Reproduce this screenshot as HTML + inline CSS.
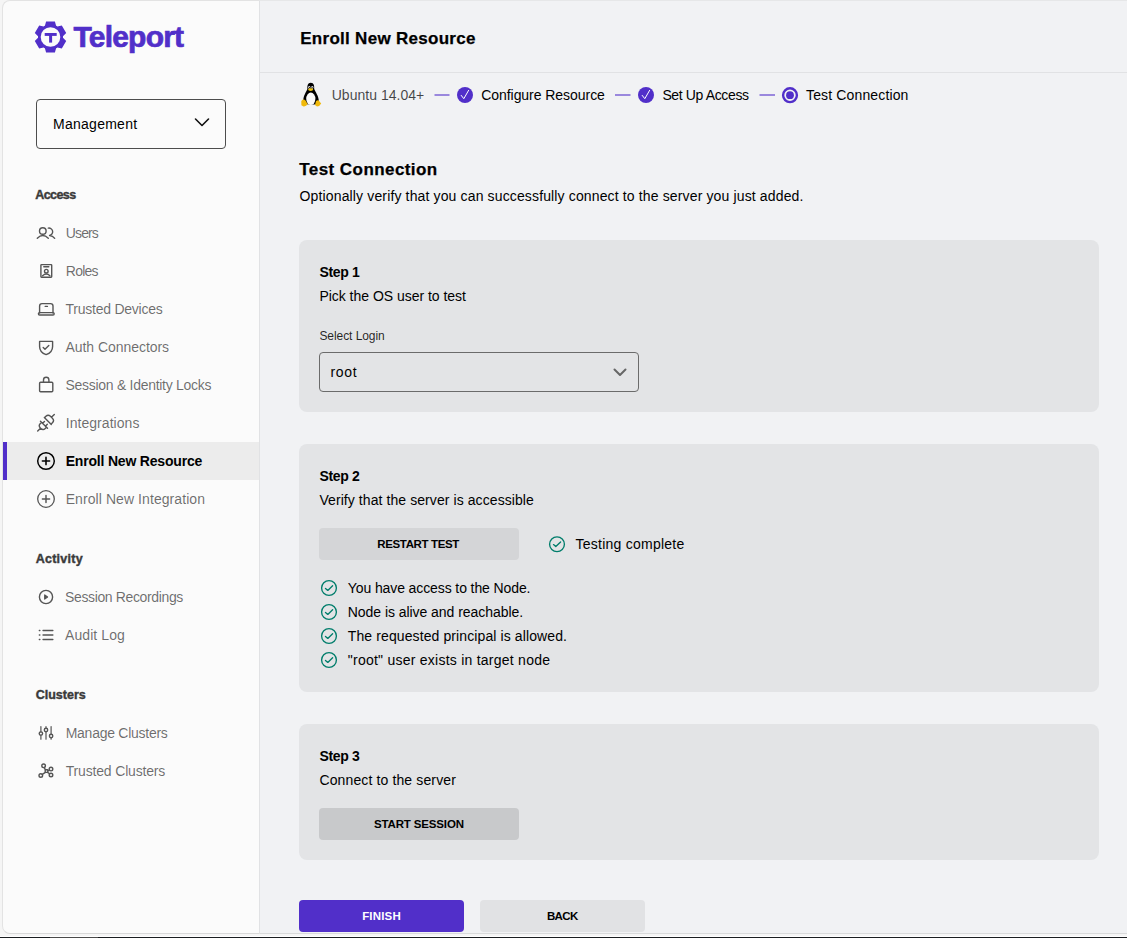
<!DOCTYPE html>
<html><head><meta charset="utf-8"><title>Teleport</title><style>
*{margin:0;padding:0;box-sizing:border-box}
html,body{width:1127px;height:938px;overflow:hidden;background:#f5f5f5;font-family:'Liberation Sans',sans-serif}
.t{position:absolute;height:60px;line-height:60px;white-space:nowrap}
.a{position:absolute}
</style></head>
<body>
<div class="a" style="left:0;top:0;width:1127px;height:938px;background:#f5f5f5"></div>
<div class="a" style="left:259px;top:0;width:868px;height:934px;background:#f1f2f4;border-top:1px solid #e6e7e8;border-bottom:1px solid #d9dadb"></div>
<div class="a" style="left:2px;top:0;width:258px;height:934px;background:#fbfbfb;border:1px solid #e3e3e3;border-bottom-color:#d9d9d9;border-right:1px solid #e1e2e4;border-radius:8px 0 0 8px"></div>
<div class="a" style="left:0;top:936px;width:1127px;height:1px;background:#fff"></div>
<div class="a" style="left:0;top:937px;width:1127px;height:1px;background:#1b1e21"></div>
<div class="a" style="left:50px;top:937px;width:48px;height:1px;background:#4a4a4a"></div>
<div class="a" style="left:260px;top:72px;width:867px;height:1px;background:#e1e2e4"></div>
<div class="a" style="left:36px;top:99px;width:190px;height:50px;border:1px solid #4d4d4d;border-radius:4px"></div>
<div class="a" style="left:3px;top:442px;width:256px;height:38px;background:#ececec"></div>
<div class="a" style="left:3px;top:442px;width:4px;height:38px;background:#512fc9"></div>
<div class="a" style="left:299px;top:240px;width:800px;height:172px;background:#e3e4e6;border-radius:8px"></div>
<div class="a" style="left:299px;top:444px;width:800px;height:248px;background:#e3e4e6;border-radius:8px"></div>
<div class="a" style="left:299px;top:724px;width:800px;height:136px;background:#e3e4e6;border-radius:8px"></div>
<div class="a" style="left:319px;top:352px;width:320px;height:40px;border:1px solid #6b6b6b;border-radius:4px"></div>
<div class="a" style="left:319px;top:528px;width:200px;height:32px;background:#d4d5d7;border-radius:4px"></div>
<div class="a" style="left:319px;top:808px;width:200px;height:32px;background:#c8c9cb;border-radius:4px"></div>
<div class="a" style="left:299px;top:900px;width:165px;height:32px;background:#512fc9;border-radius:4px"></div>
<div class="a" style="left:480px;top:900px;width:165px;height:32px;background:#e1e2e4;border-radius:4px"></div>
<svg class="a" style="left:0;top:0" width="260" height="938" viewBox="0 0 260 938" fill="none" stroke="#555" stroke-width="1.4" stroke-linecap="round" stroke-linejoin="round">
<!-- logo gear -->
<g fill="#512fc9" stroke="none">
<path id="gear" d="M44.90 25.82 L46.10 21.41 L54.90 21.41 L56.10 25.82 A12.50 12.50 0 0 1 57.38 26.56 L61.80 25.39 L66.20 33.02 L62.98 36.26 A12.50 12.50 0 0 1 62.98 37.74 L66.20 40.98 L61.80 48.61 L57.38 47.44 A12.50 12.50 0 0 1 56.10 48.18 L54.90 52.59 L46.10 52.59 L44.90 48.18 A12.50 12.50 0 0 1 43.62 47.44 L39.20 48.61 L34.80 40.98 L38.02 37.74 A12.50 12.50 0 0 1 38.02 36.26 L34.80 33.02 L39.20 25.39 L43.62 26.56 A12.50 12.50 0 0 1 44.90 25.82 Z"/>
</g>
<circle cx="50.5" cy="37" r="9.8" fill="#fbfbfb" stroke="none"/>
<rect x="44.7" y="33" width="12" height="2.9" fill="#512fc9" stroke="none"/>
<rect x="49.1" y="33" width="3" height="9.6" fill="#512fc9" stroke="none"/>
<!-- mgmt chevron -->
<path d="M195.5 119 L202 125.5 L208.5 119" stroke="#111" stroke-width="1.6"/>
<!-- users -->
<circle cx="42.8" cy="231" r="3.3"/>
<path d="M37.3 238.3 Q42.8 232.9 48.3 238.3"/>
<path d="M48.3 228.1 A3.3 3.3 0 1 1 49.6 235.4"/>
<path d="M49.6 235.6 Q52.8 235.8 54.7 238.3"/>
<!-- roles badge -->
<rect x="40.9" y="264.6" width="10.8" height="12.6" rx="0.6"/>
<path d="M43.8 266.7 H48.8"/>
<circle cx="46.3" cy="271.2" r="1.8"/>
<path d="M42.6 275.7 Q46.3 272.4 49.9 275.7"/>
<!-- laptop -->
<path d="M39.6 313 V306 Q39.6 303.6 42 303.6 H50.6 Q53 303.6 53 306 V313"/>
<rect x="38.4" y="312.6" width="15.8" height="2.4" rx="1.2"/>
<path d="M45.2 306.4 H47.4"/>
<!-- shield -->
<path d="M39.6 341.4 H52.6 V346.4 Q52.6 352.4 46.1 354.6 Q39.6 352.4 39.6 346.4 Z"/>
<path d="M43.2 347.4 L45 349.2 L48.8 345.6"/>
<!-- lock -->
<rect x="39.6" y="382.2" width="13.2" height="9.6" rx="1"/>
<path d="M43.5 382.2 V380 A2.7 2.7 0 0 1 48.9 380 V382.2"/>
<!-- plugs -->
<g transform="translate(45.9 422.85) rotate(-45)">
<path d="M-2.7 -5 V5 M-2.7 -3.5 H-4.4 Q-7.6 -3.5 -7.6 0 Q-7.6 3.5 -4.4 3.5 H-2.7 M-7.6 0 H-11.6 M-2.7 -2 H0 M-2.7 2 H0"/>
<path d="M2.7 -4.9 V4.9 M2.7 -4.6 H4.6 Q7.8 -4.6 7.8 -1.4 V1.4 Q7.8 4.6 4.6 4.6 H2.7 M7.8 0 H11.9"/>
</g>
<!-- play circle -->
<circle cx="46" cy="597" r="6.6"/>
<path d="M44.7 594.9 L47.6 597 L44.7 599.1 Z" fill="#555" stroke-width="1.2"/>
<!-- list -->
<path d="M43 630.5 H52.9 M43 635 H52.9 M43 639.5 H52.9" stroke-width="1.3"/>
<path d="M39.3 630.5 H39.9 M39.3 635 H39.9 M39.3 639.5 H39.9" stroke-width="1.3"/>
<!-- sliders -->
<path d="M40.9 726.6 V731.9 M40.9 735.9 V739.2 M46 726.6 V728.3 M46 732.2 V739.2 M51.1 726.6 V734.4 M51.1 738 V739.2" stroke-width="1.2"/>
<circle cx="40.9" cy="733.6" r="1.7"/>
<circle cx="46" cy="730" r="1.7"/>
<circle cx="51.1" cy="736" r="1.7"/>
<!-- trusted clusters graph -->
<circle cx="43.6" cy="765.8" r="1.8"/>
<circle cx="51" cy="769.1" r="1.8"/>
<circle cx="40.8" cy="775.5" r="1.8"/>
<circle cx="51" cy="775" r="1.8"/>
<rect x="45.2" y="769.8" width="2.6" height="2.6" rx="0.4"/>
<path d="M44.2 767.6 L45.5 769.8 M47.8 770.8 L49.3 770 M47.6 772.4 L49.6 773.8 M45.4 772.4 L42.3 774.4"/>
</svg>
<svg class="a" style="left:0;top:0" width="260" height="938" viewBox="0 0 260 938" fill="none" stroke-linecap="round">
<g stroke="#000" stroke-width="1.45"><circle cx="46" cy="461" r="8.3"/><path d="M46 457.4 V464.6 M42.4 461 H49.6" stroke-width="1.6"/></g>
<g stroke="#555" stroke-width="1.3"><circle cx="46" cy="499" r="8.3"/><path d="M46 495.4 V502.6 M42.4 499 H49.6" stroke-width="1.45"/></g>
</svg>
<svg class="a" style="left:260px;top:0" width="867" height="938" viewBox="260 0 867 938" fill="none" stroke-linecap="round" stroke-linejoin="round">
<!-- penguin -->
<g stroke="none">
<path d="M310.8 82.8 C307.6 82.8 307.2 86 307.4 89 C306 92.5 303.4 95.5 303.3 100.5 L305 104.2 L316.8 104.4 L318.8 100.5 C318.4 95.5 315.6 92.4 314.2 89 C314.4 86 314 82.8 310.8 82.8 Z" fill="#000"/>
<ellipse cx="310.8" cy="98.8" rx="4.6" ry="6.2" fill="#fafafa"/>
<ellipse cx="309.3" cy="87.3" rx="1.1" ry="1.4" fill="#d8d8d8"/>
<ellipse cx="312.3" cy="87.3" rx="1.1" ry="1.4" fill="#d8d8d8"/>
<circle cx="309.5" cy="87.5" r="0.55" fill="#000"/>
<circle cx="312.1" cy="87.5" r="0.55" fill="#000"/>
<ellipse cx="310.6" cy="89.6" rx="2.5" ry="1.4" fill="#f1c40f"/>
<path d="M301.3 101 Q303.5 98.5 305.5 100.5 L307.6 104 Q306.5 106.6 303.6 106.4 L301.4 105.2 Z" fill="#f0b90b"/>
<path d="M316 101 Q318.5 99.5 319.5 101.5 L321.2 103.6 Q320 106.2 317 106.5 L315 105 Z" fill="#f0b90b"/>
</g>
<!-- step lines -->
<path d="M434.5 95 H449.5 M615 95 H630.5 M759.5 95 H775" stroke="#9a88dd" stroke-width="2" stroke-linecap="butt"/>
<!-- step checks -->
<circle cx="465" cy="95" r="8" fill="#512fc9"/>
<path d="M461.2 95.4 L463.8 98.7 L468.6 90.4" stroke="#fff" stroke-width="1"/>
<circle cx="646" cy="95" r="8" fill="#512fc9"/>
<path d="M642.2 95.4 L644.8 98.7 L649.6 90.4" stroke="#fff" stroke-width="1"/>
<!-- radio -->
<circle cx="790" cy="95.2" r="6.9" stroke="#512fc9" stroke-width="2.4"/>
<circle cx="790" cy="95.2" r="3.9" fill="#512fc9"/>
<!-- select chevron -->
<path d="M614.5 369.5 L620 375 L625.5 369.5" stroke="#666" stroke-width="2"/>
<!-- teal checks -->
<g stroke="#007d6b" stroke-width="1.35">
<circle cx="557" cy="544.2" r="7.4"/><path d="M553.5 544.6 L555.8 546.6 L560.6 542"/>
<circle cx="329" cy="588" r="7.4"/><path d="M325.5 588.4 L327.8 590.4 L332.6 585.8"/>
<circle cx="329" cy="612" r="7.4"/><path d="M325.5 612.4 L327.8 614.4 L332.6 609.8"/>
<circle cx="329" cy="636" r="7.4"/><path d="M325.5 636.4 L327.8 638.4 L332.6 633.8"/>
<circle cx="329" cy="660" r="7.4"/><path d="M325.5 660.4 L327.8 662.4 L332.6 657.8"/>
</g>
</svg>
<div class="t" style="left:73.4px;top:7px;font-size:30px;font-weight:700;letter-spacing:-0.771px;color:#512FC9;-webkit-text-stroke:0.7px #512FC9;">Teleport</div>
<div class="t" style="left:53.0px;top:94px;font-size:14px;font-weight:400;letter-spacing:0.267px;color:#000;">Management</div>
<div class="t" style="left:35.3px;top:165px;font-size:12.5px;font-weight:700;letter-spacing:-0.58px;color:#3a3a3a;-webkit-text-stroke:0.4px #3a3a3a;">Access</div>
<div class="t" style="left:65.8px;top:203px;font-size:14px;font-weight:400;letter-spacing:-0.875px;color:rgba(0,0,0,0.58);">Users</div>
<div class="t" style="left:65.8px;top:241px;font-size:14px;font-weight:400;letter-spacing:-0.75px;color:rgba(0,0,0,0.58);">Roles</div>
<div class="t" style="left:65.5px;top:279px;font-size:14px;font-weight:400;letter-spacing:-0.243px;color:rgba(0,0,0,0.58);">Trusted Devices</div>
<div class="t" style="left:65.5px;top:317px;font-size:14px;font-weight:400;letter-spacing:-0.05px;color:rgba(0,0,0,0.58);">Auth Connectors</div>
<div class="t" style="left:65.5px;top:355px;font-size:14px;font-weight:400;letter-spacing:-0.287px;color:rgba(0,0,0,0.58);">Session &amp; Identity Locks</div>
<div class="t" style="left:65.7px;top:393px;font-size:14px;font-weight:400;letter-spacing:0.055px;color:rgba(0,0,0,0.58);">Integrations</div>
<div class="t" style="left:65.7px;top:431px;font-size:14px;font-weight:700;letter-spacing:-0.189px;color:#000;">Enroll New Resource</div>
<div class="t" style="left:65.7px;top:469px;font-size:14px;font-weight:400;letter-spacing:0.076px;color:rgba(0,0,0,0.58);">Enroll New Integration</div>
<div class="t" style="left:35.7px;top:529px;font-size:12.5px;font-weight:700;letter-spacing:0.257px;color:#3a3a3a;-webkit-text-stroke:0.4px #3a3a3a;">Activity</div>
<div class="t" style="left:65.0px;top:567px;font-size:14px;font-weight:400;letter-spacing:-0.365px;color:rgba(0,0,0,0.58);">Session Recordings</div>
<div class="t" style="left:65.0px;top:605px;font-size:14px;font-weight:400;letter-spacing:0.088px;color:rgba(0,0,0,0.58);">Audit Log</div>
<div class="t" style="left:35.7px;top:665px;font-size:12.5px;font-weight:700;letter-spacing:0.014px;color:#3a3a3a;-webkit-text-stroke:0.4px #3a3a3a;">Clusters</div>
<div class="t" style="left:65.7px;top:703px;font-size:14px;font-weight:400;letter-spacing:-0.264px;color:rgba(0,0,0,0.58);">Manage Clusters</div>
<div class="t" style="left:65.7px;top:741px;font-size:14px;font-weight:400;letter-spacing:-0.167px;color:rgba(0,0,0,0.58);">Trusted Clusters</div>
<div class="t" style="left:300.2px;top:9px;font-size:17px;font-weight:700;letter-spacing:0.289px;color:#000;-webkit-text-stroke:0.25px #000;">Enroll New Resource</div>
<div class="t" style="left:331.7px;top:65px;font-size:14px;font-weight:400;letter-spacing:0.025px;color:rgba(0,0,0,0.72);">Ubuntu 14.04+</div>
<div class="t" style="left:481.2px;top:65px;font-size:14px;font-weight:400;letter-spacing:-0.047px;color:#000;">Configure Resource</div>
<div class="t" style="left:662.4px;top:65px;font-size:14px;font-weight:400;letter-spacing:-0.367px;color:#000;">Set Up Access</div>
<div class="t" style="left:806.0px;top:65px;font-size:14px;font-weight:400;letter-spacing:0.143px;color:#000;">Test Connection</div>
<div class="t" style="left:299.3px;top:140px;font-size:17px;font-weight:700;letter-spacing:0.429px;color:#000;-webkit-text-stroke:0.25px #000;">Test Connection</div>
<div class="t" style="left:299.6px;top:166px;font-size:14px;font-weight:400;letter-spacing:0.14px;color:#000;">Optionally verify that you can successfully connect to the server you just added.</div>
<div class="t" style="left:319.4px;top:242px;font-size:14px;font-weight:700;letter-spacing:-0.32px;color:#000;">Step 1</div>
<div class="t" style="left:319.4px;top:266px;font-size:14px;font-weight:400;letter-spacing:-0.022px;color:#000;">Pick the OS user to test</div>
<div class="t" style="left:319.4px;top:306px;font-size:12px;font-weight:400;letter-spacing:-0.064px;color:rgba(0,0,0,0.85);">Select Login</div>
<div class="t" style="left:330.4px;top:342px;font-size:14px;font-weight:400;letter-spacing:0.7px;color:#000;">root</div>
<div class="t" style="left:319.4px;top:446px;font-size:14px;font-weight:700;letter-spacing:-0.32px;color:#000;">Step 2</div>
<div class="t" style="left:319.4px;top:470px;font-size:14px;font-weight:400;letter-spacing:0.08px;color:#000;">Verify that the server is accessible</div>
<div class="t" style="left:377.3px;top:514px;font-size:11.5px;font-weight:700;letter-spacing:-0.364px;color:#000;">RESTART TEST</div>
<div class="t" style="left:575.5px;top:514px;font-size:14px;font-weight:400;letter-spacing:0.247px;color:#000;">Testing complete</div>
<div class="t" style="left:347.8px;top:558px;font-size:14px;font-weight:400;letter-spacing:-0.104px;color:#000;">You have access to the Node.</div>
<div class="t" style="left:347.8px;top:582px;font-size:14px;font-weight:400;letter-spacing:-0.052px;color:#000;">Node is alive and reachable.</div>
<div class="t" style="left:347.8px;top:606px;font-size:14px;font-weight:400;letter-spacing:0.106px;color:#000;">The requested principal is allowed.</div>
<div class="t" style="left:347.8px;top:630px;font-size:14px;font-weight:400;letter-spacing:0.244px;color:#000;">&quot;root&quot; user exists in target node</div>
<div class="t" style="left:319.4px;top:726px;font-size:14px;font-weight:700;letter-spacing:-0.32px;color:#000;">Step 3</div>
<div class="t" style="left:319.4px;top:750px;font-size:14px;font-weight:400;letter-spacing:0.13px;color:#000;">Connect to the server</div>
<div class="t" style="left:374.0px;top:794px;font-size:11.5px;font-weight:700;letter-spacing:-0.15px;color:#000;">START SESSION</div>
<div class="t" style="left:362.2px;top:886px;font-size:11.5px;font-weight:700;letter-spacing:0.16px;color:#fff;">FINISH</div>
<div class="t" style="left:546.9px;top:886px;font-size:11.5px;font-weight:700;letter-spacing:-0.633px;color:#000;">BACK</div>
</body></html>
